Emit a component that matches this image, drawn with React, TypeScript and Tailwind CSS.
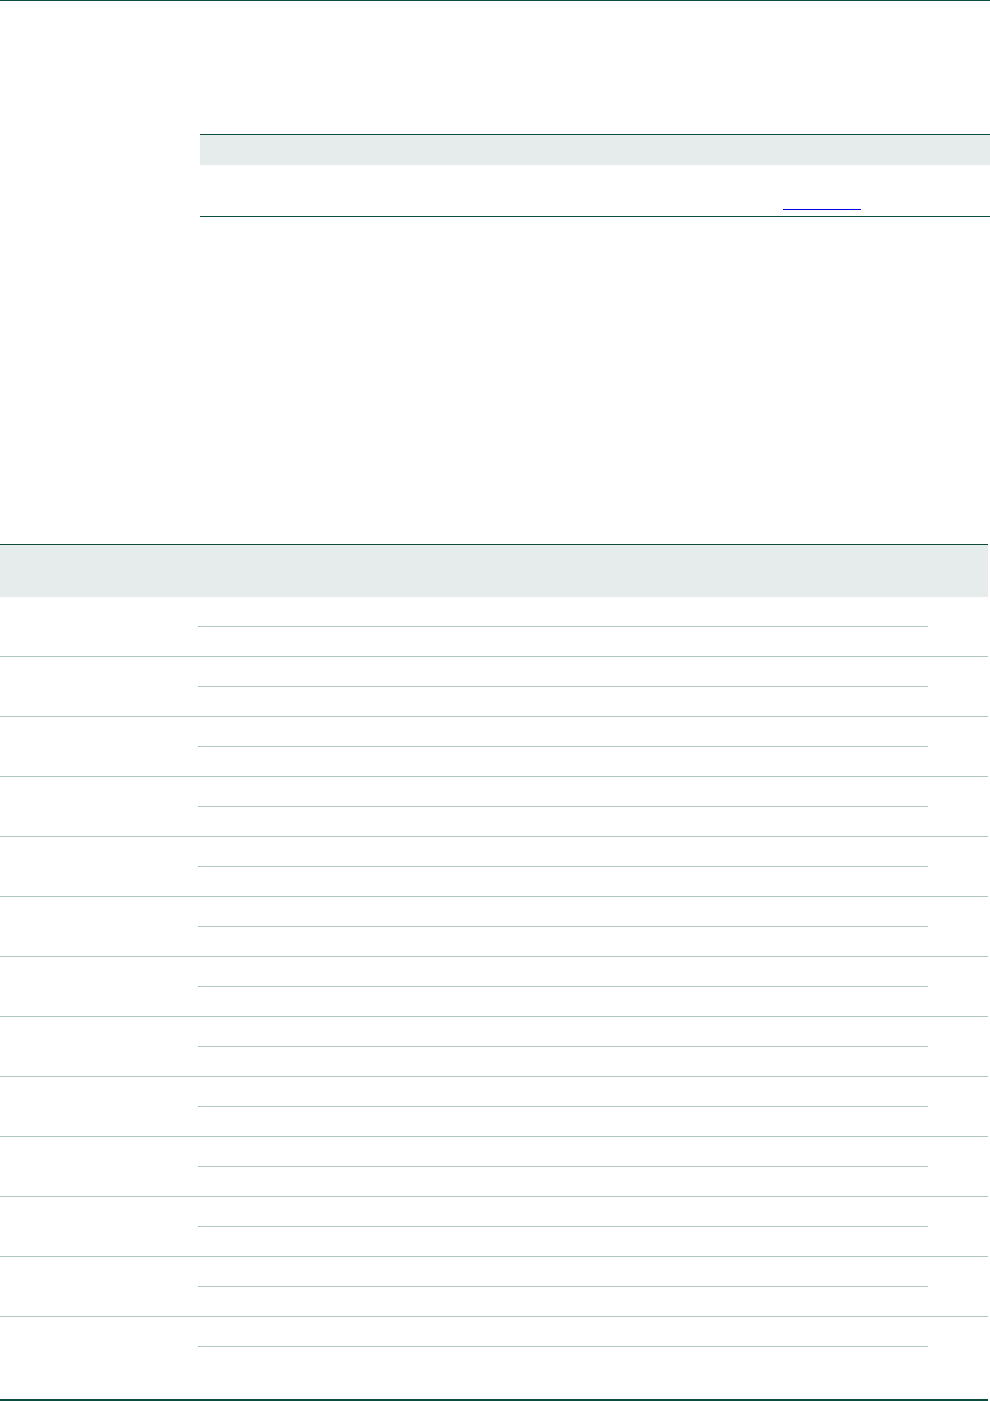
const rows = Array.from({ length: 13 }, (_, i) => i);

function Row({ last }: { last?: boolean }) {
  return (
    <div
      className={
        last
          ? "h-[84px] border-b-2 border-[#0b4d3f] pt-[29px]"
          : "h-[60px] border-b border-[#b3c7c2] pt-[29px]"
      }
    >
      <div className="ml-[198px] h-px w-[730px] bg-[#b3c7c2]" />
    </div>
  );
}

export default function App() {
  return (
    <div className="flex h-[1401px] w-[990px] flex-col bg-white font-['Liberation_Sans',Arial,sans-serif]">
      <div className="h-px w-full bg-[#0b4d3f]" />

      {/* summary table */}
      <div className="ml-[200px] mt-[133px] border-y border-[#0b4d3f]">
        <div className="h-[30px] bg-[#e6ecec]" />
        <div className="flex h-[51px] items-end pb-[6px]">
          <a className="ml-[583px] block h-px w-[78px] bg-[#0000ee]" href="#" aria-label="link" />
        </div>
      </div>

      {/* main table */}
      <div className="mt-[327px] w-[988px] border-t border-[#0b4d3f]">
        <div className="h-[52px] bg-[#e6ecec]" />
        {rows.map((i) => (
          <Row key={i} last={i === rows.length - 1} />
        ))}
      </div>
    </div>
  );
}
